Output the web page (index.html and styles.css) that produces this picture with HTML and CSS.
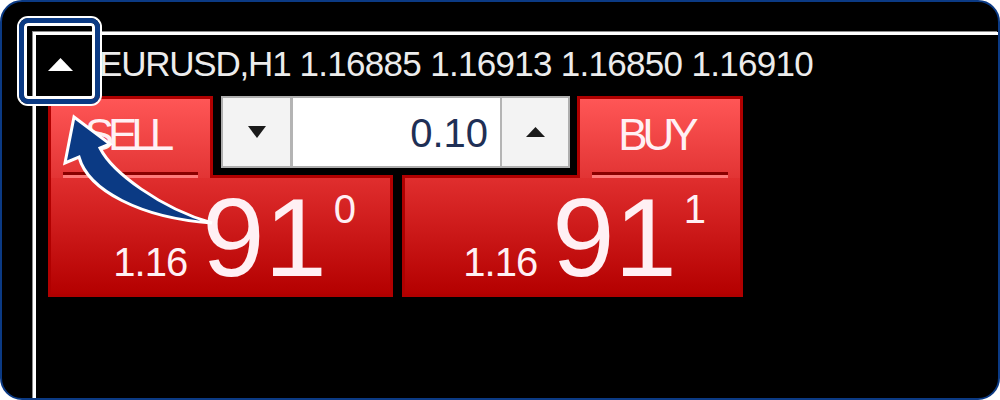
FILE: index.html
```html
<!DOCTYPE html>
<html>
<head>
<meta charset="utf-8">
<link rel="stylesheet" href="styles.css">
</head>
<body>
<div class="stage">
  <div class="frame">
    <div class="chart">
      <div class="title-row">
        <span class="collapse-btn"><svg width="25" height="13" viewBox="0 0 25 13"><polygon points="12.5,0 25,13 0,13" fill="#fff"/></svg></span>
        <span class="title"><span class="symbol">EURUSD,H1</span> 1.16885 1.16913 1.16850 1.16910</span>
      </div>
      <div class="trade-panel">
        <div class="head sell-head"><span class="label">SELL</span><span class="rule"></span></div>
        <div class="lot">
          <div class="lot-btn lot-down"><svg width="18" height="12" viewBox="0 0 18 12"><polygon points="0,0 18,0 9,12" fill="#1a1a1a"/></svg></div>
          <div class="lot-value">0.10</div>
          <div class="lot-btn lot-up"><svg width="19" height="10" viewBox="0 0 19 10"><polygon points="9.5,0 19,10 0,10" fill="#1a1a1a"/></svg></div>
        </div>
        <div class="head buy-head"><span class="label">BUY</span><span class="rule"></span></div>
        <div class="body sell-body"><span class="small">1.16</span><span class="big">91</span><span class="sup">0</span></div>
        <div class="body buy-body"><span class="small">1.16</span><span class="big">91</span><span class="sup">1</span></div>
      </div>
    </div>
  </div>
  <div class="highlight"></div>
  <svg class="arrow" width="1000" height="400" viewBox="0 0 1000 400">
    <path d="M74,117 L110,144 L100,148 C112,172 160,208 212,223 C140,218 88,190 79,157 L65,163 Z" fill="#0b3a84" stroke="#fff" stroke-width="3" stroke-linejoin="miter"/>
  </svg>
</div>
</body>
</html>
```
FILE: styles.css
```css
body {
  margin: 0;
  background: #fff;
  font-family: "Liberation Sans", Arial, sans-serif;
}
.stage {
  position: relative;
  width: 1000px;
  height: 400px;
}
.frame {
  box-sizing: border-box;
  width: 1000px;
  height: 400px;
  border: 2px solid #0b3a84;
  border-radius: 22px;
  background: #000;
  overflow: hidden;
  padding: 30px 0 0 31px;
}
.chart {
  height: 100%;
  border-top: 3px solid #fff;
  border-left: 3px solid #fff;
  box-shadow: -1px -1px 0 #8a8a8a;
}
.title-row {
  display: flex;
  align-items: center;
  height: 40px;
  padding: 9px 0 0 12px;
}
.collapse-btn {
  display: flex;
  width: 25px;
  height: 13px;
}
.title {
  margin-left: 26px;
  font-size: 35px;
  line-height: 40px;
  letter-spacing: -0.7px;
  color: #ececec;
  white-space: nowrap;
}
.symbol {
  letter-spacing: -1.2px;
}
.trade-panel {
  display: grid;
  grid-template-columns: 165px 180px 9px 175px 166px;
  grid-template-rows: 79px 122px;
  margin: 12px 0 0 12px;
}
.head {
  grid-row: 1;
  position: relative;
  z-index: 1;
  margin-bottom: -3px;
  border: 3px solid #b00000;
  border-bottom: 0;
  padding: 14px 12px 0;
  background: linear-gradient(#ff5656, #e23434);
  display: flex;
  flex-direction: column;
  align-items: center;
  justify-content: space-between;
}
.sell-head { grid-column: 1; }
.buy-head { grid-column: 5; }
.label {
  font-size: 44px;
  line-height: 1;
  letter-spacing: -5px;
  margin-right: 8px;
  color: #fff0f4;
}
.sell-head .label {
  letter-spacing: -6px;
}
.rule {
  align-self: stretch;
  height: 3px;
  background: #8a0000;
  border-bottom: 3px solid #ff7a7a;
}
.lot {
  grid-column: 2 / 5;
  grid-row: 1;
  align-self: start;
  margin-left: 8px;
  width: 349px;
  height: 72px;
  box-sizing: border-box;
  border: 2px solid #aeaeae;
  background: #fff;
  display: flex;
}
.lot-btn {
  width: 67px;
  background: #f3f3f3;
  display: flex;
  align-items: center;
  justify-content: center;
}
.lot-down { border-right: 3px solid #b4b4b4; }
.lot-up {
  width: 66px;
  border-left: 2px solid #b4b4b4;
}
.lot-value {
  flex: 1;
  text-align: right;
  padding: 3px 12px 0 0;
  font-size: 40px;
  line-height: 65px;
  color: #1f2f55;
}
.body {
  grid-row: 2;
  border: 3px solid #b00000;
  background: linear-gradient(#e02e2e, #b40000);
  display: flex;
  align-items: baseline;
  justify-content: flex-end;
  padding: 4px 34px 0 0;
  color: #fff0f4;
}
.sell-body { grid-column: 1 / 3; }
.buy-body { grid-column: 4 / 6; }
.small {
  font-size: 40px;
  line-height: 1;
  letter-spacing: -1px;
}
.big {
  font-size: 112px;
  line-height: 1;
  margin-left: 15px;
}
.sup {
  align-self: flex-start;
  font-size: 40px;
  line-height: 1;
  margin: 7px 0 0 7px;
}
.highlight {
  position: absolute;
  z-index: 2;
  left: 19px;
  top: 18px;
  width: 81px;
  height: 86px;
  box-sizing: border-box;
  border: 5px solid #0b3a84;
  border-radius: 9px;
  box-shadow: 0 0 0 2px #fff, inset 0 0 0 3px #fff;
}
.arrow {
  position: absolute;
  z-index: 2;
  left: 0;
  top: 0;
  pointer-events: none;
}
```
